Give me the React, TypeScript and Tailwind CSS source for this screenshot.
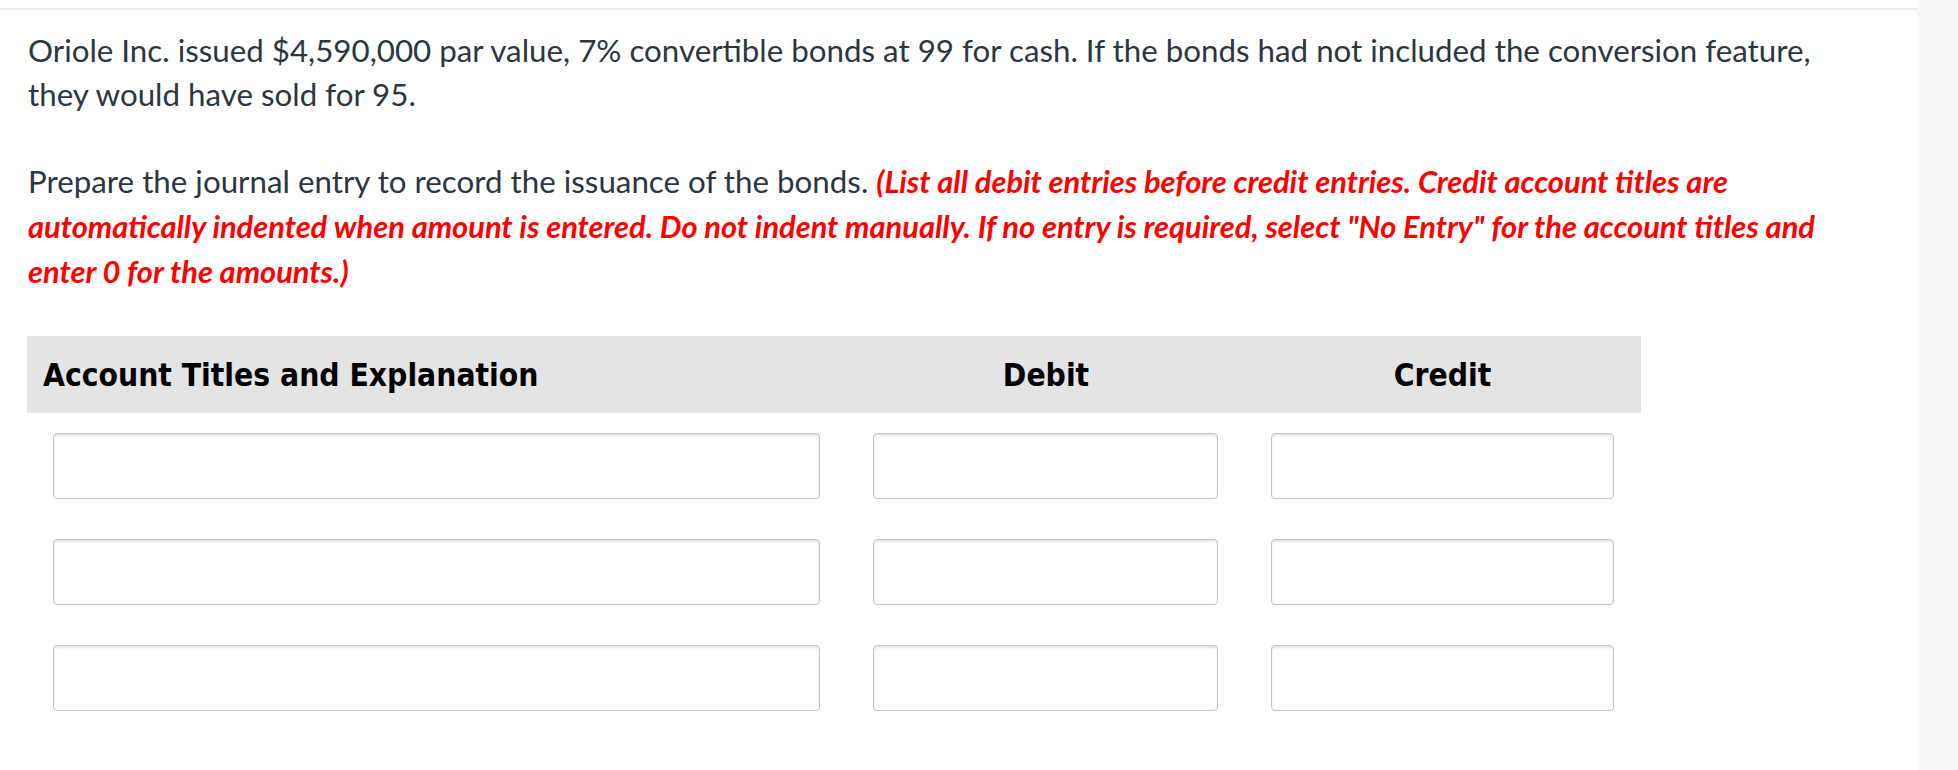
import React from "react";

const rows = [0, 1, 2];

function EntryInput() {
  return (
    <input
      type="text"
      className="h-[66px] w-full rounded-[4px] border border-[#c4c4c4] bg-white shadow-[inset_0_2px_2px_rgba(0,0,0,0.1)] outline-none"
    />
  );
}

export default function App() {
  return (
    <div className="flex min-h-[770px] bg-white font-['Lato',_'Open_Sans',_sans-serif]">
      <main className="w-[1917px] shrink-0 pt-[8px]">
        <div className="h-[2px] bg-[#ececec]" />

        <div className="w-[1850px] pl-[28px] pt-[18px] text-[31.3px] leading-[44px] text-[#2b3641]">
          <p>
            Oriole Inc. issued $4,590,000 par value, 7% convertible bonds at 99 for cash. If the bonds had not
            included the conversion feature, they would have sold for 95.
          </p>
          <p className="mt-[43px]">
            Prepare the journal entry to record the issuance of the bonds.{" "}
            <span className="text-[30.8px] font-bold italic text-[#ff0000]">
              (List all debit entries before credit entries. Credit account titles are automatically indented when
              amount is entered. Do not indent manually. If no entry is required, select "No Entry" for the account
              titles and enter 0 for the amounts.)
            </span>
          </p>
        </div>

        {/* journal table */}
        <div className="ml-[27px] mt-[42px] w-[1614px]">
          <div className="grid h-[77px] grid-cols-[820px_397px_397px] items-center bg-[#e4e4e4] pt-[3px] font-['DejaVu_Sans_Condensed',_'DejaVu_Sans',_sans-serif] text-[31.5px] font-bold text-black [font-stretch:condensed]">
            <div className="pl-[16px]">Account Titles and Explanation</div>
            <div className="pl-[1px] text-center">Debit</div>
            <div className="text-center">Credit</div>
          </div>

          {rows.map((r) => (
            <div key={r} className="grid grid-cols-[820px_397px_397px]">
              <div className="py-[20px] pl-[26px] pr-[27px]">
                <EntryInput />
              </div>
              <div className="px-[26px] py-[20px]">
                <EntryInput />
              </div>
              <div className="px-[27px] py-[20px]">
                <EntryInput />
              </div>
            </div>
          ))}
        </div>
      </main>
      <aside className="flex-1 bg-[#f8f8f8]" />
    </div>
  );
}
